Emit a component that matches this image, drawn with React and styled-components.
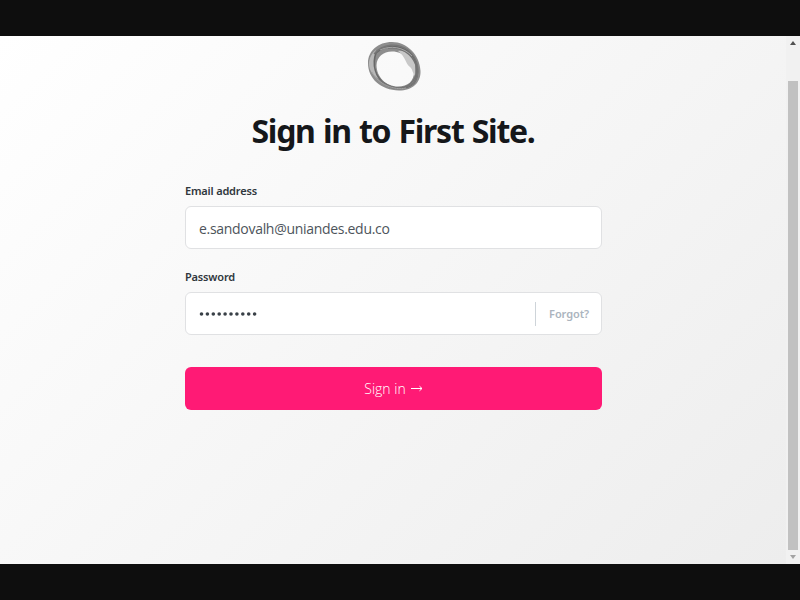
import React from "react";
import styled, { createGlobalStyle } from "styled-components";

const GlobalStyle = createGlobalStyle`
  * { box-sizing: border-box; }
  body { margin: 0; overflow: hidden; font-family: "Noto Sans", "Open Sans", sans-serif; }
`;

const Frame = styled.div`
  width: 800px;
  height: 600px;
  padding: 36px 0;
  background: #0e0e0e;
`;

const Viewport = styled.div`
  display: flex;
  height: 528px;
  background: #f1f1f1;
`;

const Page = styled.main`
  flex: 1;
  display: flex;
  flex-direction: column;
  align-items: center;
  background: linear-gradient(135deg, #ffffff 0%, #ededed 100%);
`;

const Logo = styled.svg`
  display: block;
  width: 60px;
  height: 56px;
  margin: 2px 0 0 2px;
`;

const Title = styled.h1`
  margin: 14px 0 0;
  height: 46px;
  line-height: 46px;
  font-size: 32px;
  font-weight: 700;
  letter-spacing: -1.3px;
  word-spacing: 1.3px;
  white-space: nowrap;
  color: #15171a;
`;

const Form = styled.form`
  display: flex;
  flex-direction: column;
  width: 417px;
  margin-top: 29px;
  margin-left: 1px;
`;

const Field = styled.div`
  display: flex;
  flex-direction: column;
  height: ${(p) => p.$height}px;
`;

const Label = styled.label`
  height: 16px;
  margin-bottom: 7px;
  line-height: 16px;
  font-size: 11px;
  font-weight: 600;
  letter-spacing: -0.18px;
  color: #30373d;
`;

const InputBox = styled.div`
  display: flex;
  align-items: center;
  height: 43px;
  padding: 0 12px 0 13px;
  border: 1px solid #e0e1e3;
  border-radius: 6px;
  background: #fff;
`;

const Value = styled.span`
  flex: 1;
  padding-top: 2px;
  font-family: "Open Sans", sans-serif;
  font-size: 14px;
  font-weight: 400;
  line-height: 20px;
  letter-spacing: -0.3px;
  color: #4d545b;
`;

const Dots = styled.svg`
  display: block;
  width: 60px;
  height: 6px;
  margin-right: auto;
  margin-top: 1px;
`;

const Forgot = styled.span`
  height: 24px;
  padding-left: 13px;
  border-left: 1px solid #ced4d9;
  font-size: 11px;
  font-weight: 600;
  line-height: 24px;
  letter-spacing: -0.1px;
  color: #abb4be;
`;

const SubmitButton = styled.button`
  display: flex;
  align-items: center;
  justify-content: center;
  gap: 5px;
  height: 43px;
  padding: 0;
  border: 0;
  border-radius: 6px;
  background: #ff1a75;
  color: #fff;
  font-family: "Open Sans", sans-serif;
  font-size: 14px;
  font-weight: 300;
`;

const Scrollbar = styled.div`
  display: flex;
  flex-direction: column;
  align-items: center;
  justify-content: space-between;
  width: 14px;
  padding: 5px 1px 5px 0;
`;

const Thumb = styled.div`
  width: 10px;
  height: 469px;
  margin-top: 31px;
  background: #c1c1c1;
`;

const ScrollArrow = styled.svg`
  display: block;
  width: 6px;
  height: 4px;
  fill: ${(p) => p.$color};
`;

function LogoMark() {
  return (
    <Logo viewBox="0 0 60 56" fill="none">
      <path
        fill="#8d8d8d"
        fillRule="evenodd"
        d="M4 25C4 13 14 4 28 4C43 4 56 17 56.500 33C57 45 48 52.500 35 52.500C17 52 4 41 4 25ZM12.500 27C12.500 39 22 48.500 34 48.500C44 48.500 50 43 50 34C50 23 40 13.500 28 13.500C19 13.500 13 19 12.500 27Z"
      />
      <path d="M34 13C41 12 47 17 51 24V38C48 34 49 32 46 29C41 25 42 19 34 13Z" fill="#c8c8c8" />
      <path d="M5 26C5 20 8 15 12 12C9 22 11 33 17 42C10 39 5 33 5 26Z" fill="#b8b8b8" />
      <path d="M12 15C21 6 37 7 46 15C54 23 56 36 50 45C43 52 30 52 21 46C11 39 8 26 12 15Z" stroke="#686868" strokeWidth="1.6" />
      <path d="M10 16C19 5 34 5 44 12C55 21 57 37 49 46C39 53 24 50 16 42" stroke="#777" strokeWidth="1.3" />
      <path d="M24 10C37 8 48 16 52 27C55 39 47 49 36 50" stroke="#737373" strokeWidth="1.5" />
      <path d="M8 34C14 46 30 53 42 50M16 12C26 7 40 9 48 18" stroke="#a5a5a5" />
    </Logo>
  );
}

export default function App() {
  return (
    <>
      <GlobalStyle />
      <Frame>
        <Viewport>
          <Page>
            <LogoMark />
            <Title>Sign in to First Site.</Title>
            <Form>
              <Field $height={86}>
                <Label>Email address</Label>
                <InputBox><Value>e.sandovalh@uniandes.edu.co</Value></InputBox>
              </Field>
              <Field $height={98}>
                <Label>Password</Label>
                <InputBox>
                  <Dots viewBox="0 0 60 6" fill="#394047">
                    {Array.from({ length: 10 }, (_, i) => (
                      <circle key={i} cx={2.5 + i * 5.9} cy="3" r="1.8" />
                    ))}
                  </Dots>
                  <Forgot>Forgot?</Forgot>
                </InputBox>
              </Field>
              <SubmitButton type="button">
                <span>Sign in</span>
                <svg width="12" height="7" viewBox="0 0 12 7" fill="none" stroke="#fff">
                  <path d="M0 3.5H11M8.5 1.2L11 3.5L8.5 5.8" />
                </svg>
              </SubmitButton>
            </Form>
          </Page>
          <Scrollbar>
            <ScrollArrow $color="#505050" viewBox="0 0 6 4"><path d="M0 4L3 0L6 4Z" /></ScrollArrow>
            <Thumb />
            <ScrollArrow $color="#a3a3a3" viewBox="0 0 6 4"><path d="M0 0L3 4L6 0Z" /></ScrollArrow>
          </Scrollbar>
        </Viewport>
      </Frame>
    </>
  );
}
